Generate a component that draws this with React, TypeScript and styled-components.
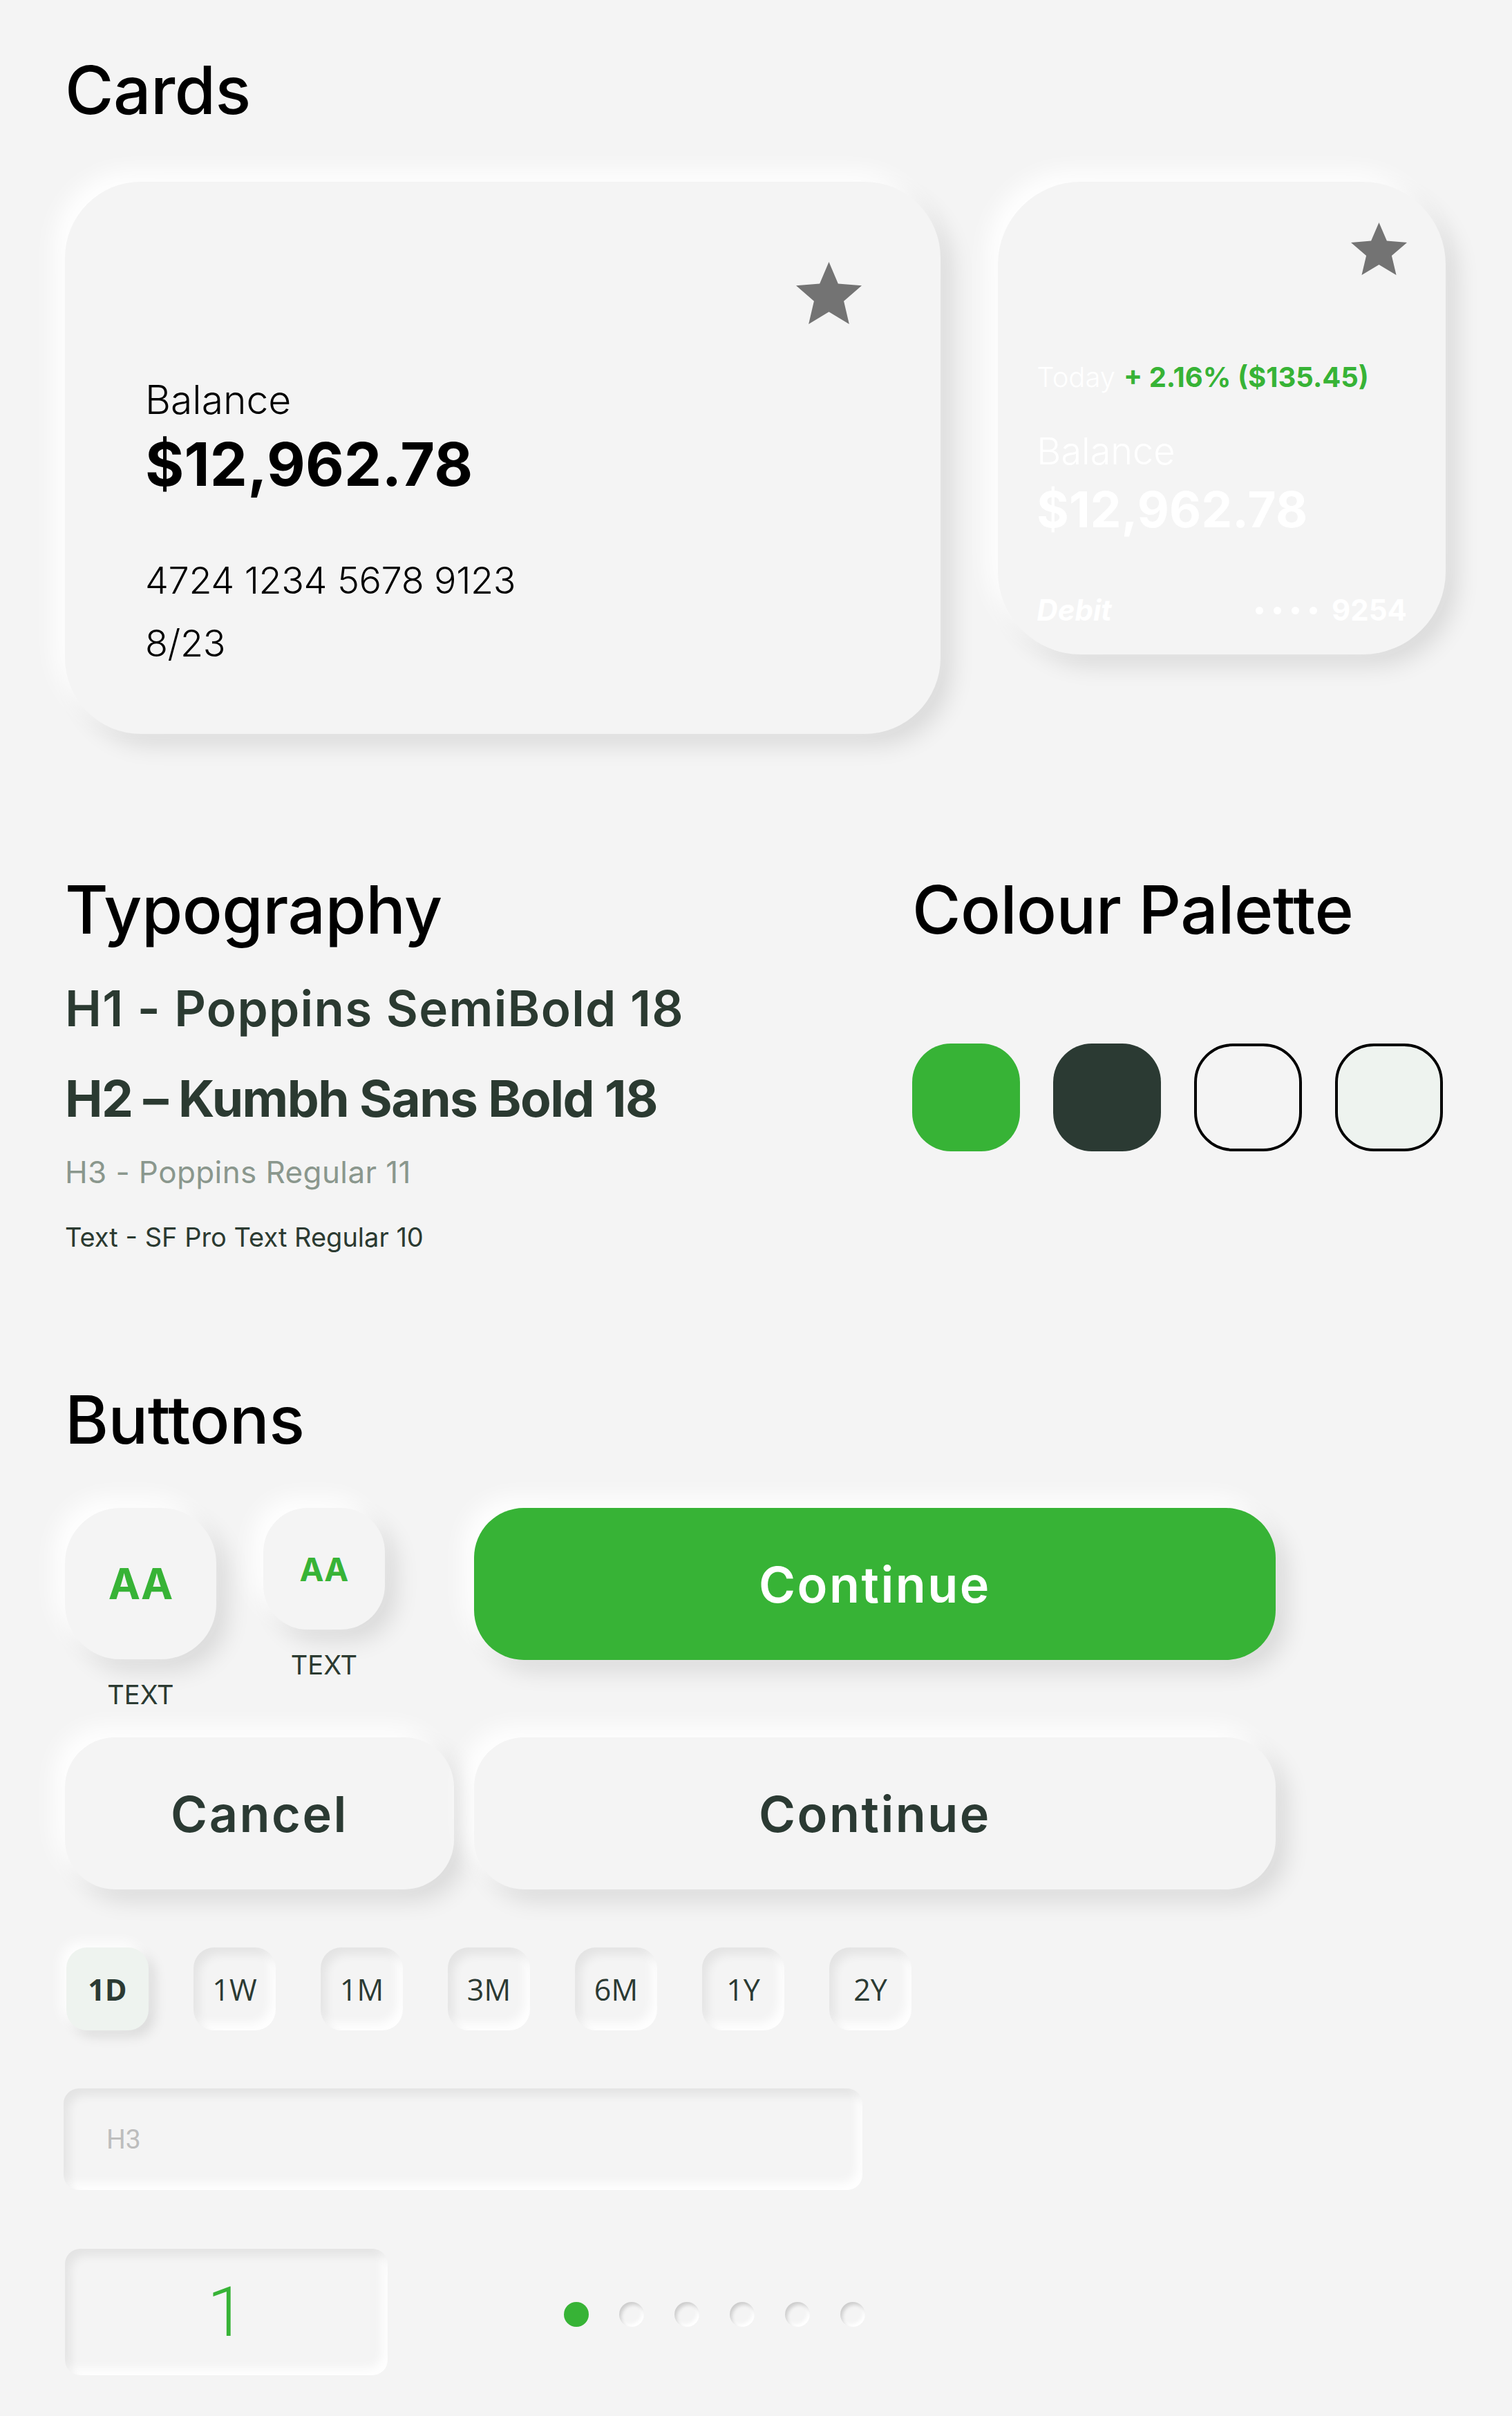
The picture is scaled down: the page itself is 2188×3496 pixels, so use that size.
import React from "react";
import styled, { createGlobalStyle, css } from "styled-components";

const GREEN = "#37b336";
const DARK = "#2b3a33";
const BG = "#f4f4f4";

const Global = createGlobalStyle`
  html, body { margin: 0; padding: 0; background: ${BG}; }
  body { font-family: "Inter", "Liberation Sans", sans-serif; -webkit-font-smoothing: antialiased; }
  * { box-sizing: border-box; }
`;

const raised = css`
  box-shadow: -16px -16px 32px rgba(255, 255, 255, 0.95), 16px 16px 34px rgba(0, 0, 0, 0.11);
`;
const raisedSmall = css`
  box-shadow: -8px -8px 18px rgba(255, 255, 255, 0.95), 9px 9px 18px rgba(0, 0, 0, 0.1);
`;
const inset = css`
  box-shadow: inset 8px 10px 14px rgba(0, 0, 0, 0.065), inset -8px -10px 14px rgba(255, 255, 255, 0.95);
`;

const Page = styled.div`
  width: 2188px;
  min-height: 3496px;
  background: ${BG};
  padding: 82px 96px 0 94px;
  display: flex;
  flex-direction: column;
`;

const SectionTitle = styled.h2`
  margin: 0;
  font-family: "Inter", sans-serif;
  font-weight: 500;
  font-size: 96px;
  line-height: 1;
  color: #000;
  letter-spacing: -0.5px;
`;

/* Cards */
const CardsRow = styled.div`
  margin-top: 85px;
  display: flex;
  align-items: flex-start;
  gap: 83px;
`;

const BigCard = styled.div`
  width: 1268px;
  height: 799px;
  border-radius: 110px;
  background: ${BG};
  ${raised};
  padding: 116px 114px 0 116px;
  display: flex;
  flex-direction: column;
`;

const SmallCard = styled.div`
  width: 648px;
  height: 684px;
  border-radius: 120px;
  background: ${BG};
  ${raised};
  padding: 59px 56px 0 56px;
  display: flex;
  flex-direction: column;
`;

const StarRow = styled.div`
  display: flex;
  justify-content: flex-end;
`;

const StarIcon = ({ w, h }: { w: number; h: number }) => (
  <svg width={w} height={h} viewBox="2 2 20 19" preserveAspectRatio="none">
    <path
      fill="#737373"
      d="M12 17.27L18.18 21l-1.64-7.03L22 9.24l-7.19-.61L12 2 9.19 8.63 2 9.24l5.46 4.73L5.82 21z"
    />
  </svg>
);

const CardLabel = styled.div<{ $mt: number; $size: number; $color?: string }>`
  margin-top: ${(p) => p.$mt}px;
  font-family: "Inter", sans-serif;
  font-weight: 300;
  font-size: ${(p) => p.$size}px;
  line-height: 1;
  color: ${(p) => p.$color || "#000"};
`;

const CardAmount = styled.div<{ $mt: number; $size: number; $color?: string }>`
  margin-top: ${(p) => p.$mt}px;
  font-family: "Inter", sans-serif;
  font-weight: 700;
  font-size: ${(p) => p.$size}px;
  line-height: 1;
  color: ${(p) => p.$color || "#000"};
  letter-spacing: 0.2px;
`;

const CardLine = styled.div<{ $mt: number }>`
  margin-top: ${(p) => p.$mt}px;
  font-family: "Inter", sans-serif;
  font-weight: 300;
  font-size: 54px;
  line-height: 1;
  color: #000;
  letter-spacing: -0.4px;
`;

const TodayRow = styled.div`
  margin-top: 128px;
  display: flex;
  align-items: baseline;
  gap: 12px;
  font-size: 40px;
  line-height: 1;
  font-family: "Inter", sans-serif;
`;

const TodayLabel = styled.span`
  color: #fff;
  font-weight: 300;
`;

const TodayChange = styled.span`
  color: ${GREEN};
  font-weight: 700;
`;

const DebitRow = styled.div`
  margin-top: 89px;
  display: flex;
  justify-content: space-between;
  align-items: center;
  font-family: "Inter", sans-serif;
  font-size: 42px;
  line-height: 1;
  color: #fff;
  font-weight: 700;
`;

const DebitLabel = styled.span`
  font-style: italic;
`;

const CardDigits = styled.span`
  display: flex;
  align-items: center;
  gap: 15px;
`;

const Dot = styled.span`
  width: 11px;
  height: 11px;
  border-radius: 50%;
  background: #fff;
`;

const DigitsText = styled.span`
  margin-left: 6px;
`;

/* Typography & Palette */
const TwoCols = styled.div`
  margin-top: 206px;
  display: flex;
`;

const TypeCol = styled.div`
  width: 1226px;
  display: flex;
  flex-direction: column;
`;

const PaletteCol = styled.div`
  display: flex;
  flex-direction: column;
`;

const TypeSample = styled.div<{
  $mt: number;
  $size: number;
  $weight: number;
  $color: string;
  $spacing?: number;
}>`
  margin-top: ${(p) => p.$mt}px;
  font-family: "Inter", sans-serif;
  font-size: ${(p) => p.$size}px;
  font-weight: ${(p) => p.$weight};
  color: ${(p) => p.$color};
  letter-spacing: ${(p) => p.$spacing || 0}px;
  line-height: 1;
`;

const Swatches = styled.div`
  margin-top: 146px;
  display: flex;
  gap: 48px;
`;

const Swatch = styled.div<{ $bg: string; $outlined?: boolean }>`
  width: 156px;
  height: 156px;
  border-radius: 56px;
  background: ${(p) => p.$bg};
  border: ${(p) => (p.$outlined ? "4px solid #000" : "none")};
`;

/* Buttons */
const ButtonsSection = styled.section`
  margin-top: 197px;
  display: flex;
  flex-direction: column;
`;

const ButtonsGrid = styled.div`
  margin-top: 80px;
  display: grid;
  grid-template-columns: 563px 1160px;
  column-gap: 29px;
  row-gap: 43px;
  align-items: start;
`;

const IconButtons = styled.div`
  display: flex;
  gap: 68px;
`;

const IconCol = styled.div`
  display: flex;
  flex-direction: column;
  align-items: center;
  gap: 32px;
`;

const RoundButton = styled.button<{ $size: number; $radius: number; $font: number }>`
  width: ${(p) => p.$size}px;
  height: ${(p) => p.$size}px;
  border-radius: ${(p) => p.$radius}px;
  border: none;
  background: ${BG};
  ${raised};
  color: ${GREEN};
  font-family: "Inter", sans-serif;
  font-weight: 700;
  font-size: ${(p) => p.$font}px;
  display: flex;
  align-items: center;
  justify-content: center;
  padding: 0;
`;

const SmallLabel = styled.span`
  font-family: "Inter", sans-serif;
  font-size: 38px;
  line-height: 1;
  color: #2b3a31;
`;

const PillButton = styled.button<{ $primary?: boolean }>`
  height: 220px;
  width: 100%;
  border-radius: 72px;
  border: none;
  background: ${(p) => (p.$primary ? GREEN : BG)};
  ${raised};
  color: ${(p) => (p.$primary ? "#fff" : DARK)};
  font-family: "Inter", sans-serif;
  font-weight: 600;
  font-size: 72px;
  letter-spacing: 2.5px;
  display: flex;
  align-items: center;
  justify-content: center;
  padding: 0;
`;

const Chips = styled.div`
  margin-top: 84px;
  display: flex;
  gap: 65px;
  padding-left: 2px;
`;

const Chip = styled.div<{ $active?: boolean }>`
  width: 119px;
  height: 120px;
  border-radius: 30px;
  display: flex;
  align-items: center;
  justify-content: center;
  font-family: "Open Sans", sans-serif;
  font-size: 43px;
  color: ${DARK};
  font-weight: ${(p) => (p.$active ? 700 : 400)};
  background: ${(p) => (p.$active ? "#eef3ef" : BG)};
  ${(p) => (p.$active ? raisedSmall : inset)};
`;

const Field = styled.div`
  margin-top: 84px;
  margin-left: -2px;
  width: 1156px;
  height: 147px;
  border-radius: 22px;
  ${inset};
  display: flex;
  align-items: center;
  padding-left: 62px;
  font-family: "Roboto", sans-serif;
  font-size: 39px;
  color: #bdbdbd;
`;

const BottomRow = styled.div`
  margin-top: 85px;
  display: flex;
  align-items: center;
  gap: 255px;
`;

const NumberBox = styled.div`
  width: 467px;
  height: 183px;
  border-radius: 22px;
  ${inset};
  display: flex;
  align-items: center;
  justify-content: center;
  font-family: "Roboto", sans-serif;
  font-weight: 300;
  font-size: 100px;
  color: ${GREEN};
`;

const Pager = styled.div`
  display: flex;
  gap: 44px;
  margin-top: 6px;
`;

const PagerDot = styled.span<{ $active?: boolean }>`
  width: 36px;
  height: 36px;
  border-radius: 50%;
  background: ${(p) => (p.$active ? GREEN : BG)};
  box-shadow: ${(p) =>
    p.$active
      ? "none"
      : "inset 3px 4px 5px rgba(0,0,0,0.16), inset -3px -4px 5px rgba(255,255,255,1)"};
`;

const ranges = ["1D", "1W", "1M", "3M", "6M", "1Y", "2Y"];

export default function App() {
  return (
    <>
      <Global />
      <Page>
        <SectionTitle>Cards</SectionTitle>
        <CardsRow>
          <BigCard>
            <StarRow>
              <StarIcon w={95} h={90} />
            </StarRow>
            <CardLabel $mt={81} $size={57}>Balance</CardLabel>
            <CardAmount $mt={22} $size={86}>$12,962.78</CardAmount>
            <CardLine $mt={98}>4724 1234 5678 9123</CardLine>
            <CardLine $mt={37}>8/23</CardLine>
          </BigCard>
          <SmallCard>
            <StarRow>
              <StarIcon w={81} h={76} />
            </StarRow>
            <TodayRow>
              <TodayLabel>Today</TodayLabel>
              <TodayChange>+ 2.16% ($135.45)</TodayChange>
            </TodayRow>
            <CardLabel $mt={60} $size={54} $color="#fff">Balance</CardLabel>
            <CardAmount $mt={22} $size={71} $color="#fff">$12,962.78</CardAmount>
            <DebitRow>
              <DebitLabel>Debit</DebitLabel>
              <CardDigits>
                <Dot />
                <Dot />
                <Dot />
                <Dot />
                <DigitsText>9254</DigitsText>
              </CardDigits>
            </DebitRow>
          </SmallCard>
        </CardsRow>

        <TwoCols>
          <TypeCol>
            <SectionTitle>Typography</SectionTitle>
            <TypeSample $mt={60} $size={71} $weight={600} $color="#2b3a31" $spacing={1.3}>
              H1 - Poppins SemiBold 18
            </TypeSample>
            <TypeSample $mt={58} $size={73} $weight={700} $color="#2b3a31" $spacing={-1.5}>
              H2 – Kumbh Sans Bold 18
            </TypeSample>
            <TypeSample $mt={48} $size={44} $weight={400} $color="#8a978d" $spacing={0.4}>
              H3 - Poppins Regular 11
            </TypeSample>
            <TypeSample $mt={53} $size={38} $weight={400} $color="#2b3a31">
              Text - SF Pro Text Regular 10
            </TypeSample>
          </TypeCol>
          <PaletteCol>
            <SectionTitle>Colour Palette</SectionTitle>
            <Swatches>
              <Swatch $bg={GREEN} />
              <Swatch $bg={DARK} />
              <Swatch $bg={BG} $outlined />
              <Swatch $bg="#eef3ef" $outlined />
            </Swatches>
          </PaletteCol>
        </TwoCols>

        <ButtonsSection>
          <SectionTitle>Buttons</SectionTitle>
          <ButtonsGrid>
            <IconButtons>
              <IconCol>
                <RoundButton $size={219} $radius={80} $font={62}>AA</RoundButton>
                <SmallLabel>TEXT</SmallLabel>
              </IconCol>
              <IconCol>
                <RoundButton $size={176} $radius={64} $font={47}>AA</RoundButton>
                <SmallLabel>TEXT</SmallLabel>
              </IconCol>
            </IconButtons>
            <PillButton $primary>Continue</PillButton>
            <PillButton>Cancel</PillButton>
            <PillButton>Continue</PillButton>
          </ButtonsGrid>
        </ButtonsSection>

        <Chips>
          {ranges.map((r, i) => (
            <Chip key={r} $active={i === 0}>
              {r}
            </Chip>
          ))}
        </Chips>

        <Field>H3</Field>

        <BottomRow>
          <NumberBox>1</NumberBox>
          <Pager>
            {[0, 1, 2, 3, 4, 5].map((i) => (
              <PagerDot key={i} $active={i === 0} />
            ))}
          </Pager>
        </BottomRow>
      </Page>
    </>
  );
}
